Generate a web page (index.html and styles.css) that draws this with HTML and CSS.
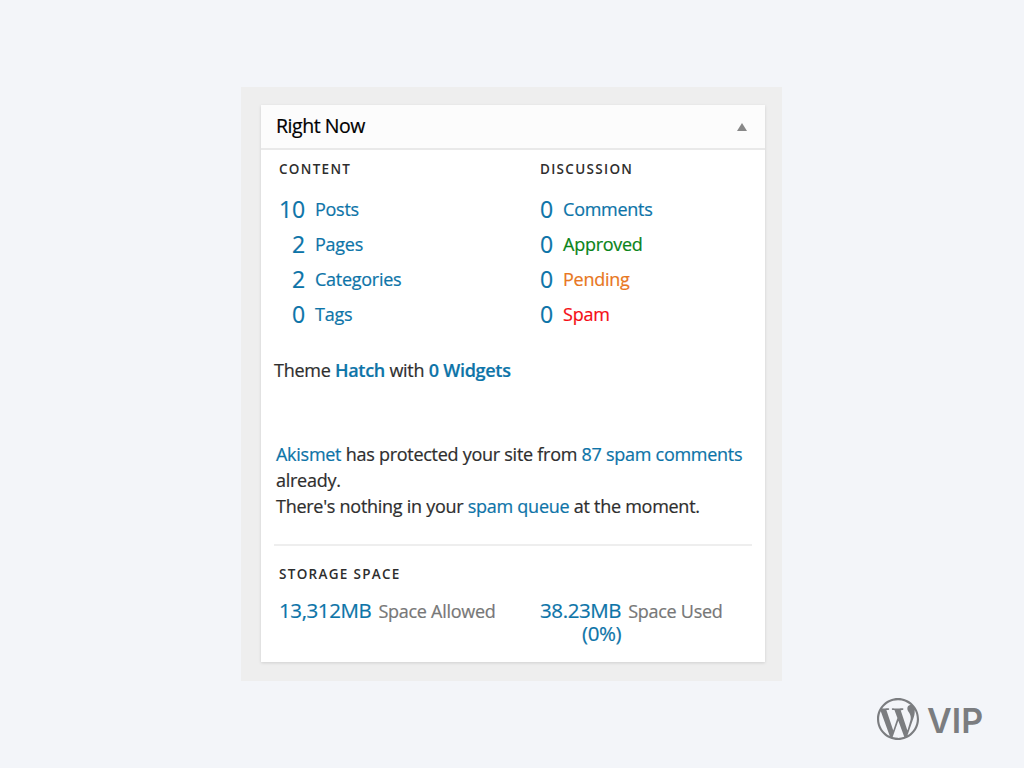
FILE: index.html
```html
<!DOCTYPE html>
<html lang="en">
<head>
<meta charset="utf-8">
<title>Right Now</title>
<link rel="stylesheet" href="styles.css">
</head>
<body>
<main class="frame">
  <section class="panel">
    <header class="panel-head">
      <h2 class="panel-title">Right Now</h2>
      <svg class="toggle" width="10" height="8" viewBox="0 0 10 8"><path d="M5 0L10 8H0z"/></svg>
    </header>
    <div class="columns">
      <div class="column">
        <h3 class="label">Content</h3>
        <div class="row"><span class="num wide">10</span><span class="name">Posts</span></div>
        <div class="row"><span class="num wide">2</span><span class="name">Pages</span></div>
        <div class="row"><span class="num wide">2</span><span class="name">Categories</span></div>
        <div class="row"><span class="num wide">0</span><span class="name">Tags</span></div>
      </div>
      <div class="column">
        <h3 class="label">Discussion</h3>
        <div class="row"><span class="num">0</span><span class="name">Comments</span></div>
        <div class="row"><span class="num">0</span><span class="name approved">Approved</span></div>
        <div class="row"><span class="num">0</span><span class="name pending">Pending</span></div>
        <div class="row"><span class="num">0</span><span class="name spam">Spam</span></div>
      </div>
    </div>
    <p class="theme">Theme <a class="link strong">Hatch</a> with <a class="link strong">0 Widgets</a></p>
    <p class="akismet"><a class="link">Akismet</a> has protected your site from <a class="link">87 spam comments</a><br>already.<br>There's nothing in your <a class="link">spam queue</a> at the moment.</p>
    <div class="storage">
      <h3 class="label storage-label">Storage Space</h3>
      <div class="quota">
        <div class="quota-item"><div class="amount"><div>13,312MB</div></div><span class="caption">Space Allowed</span></div>
        <div class="quota-item"><div class="amount"><div>38.23MB</div><div>(0%)</div></div><span class="caption">Space Used</span></div>
      </div>
    </div>
  </section>
</main>
<footer class="brand">
  <svg class="brand-mark" viewBox="0 0 24 24"><path d="M21.469 6.825c.84 1.537 1.318 3.3 1.318 5.175 0 3.979-2.156 7.456-5.363 9.325l3.295-9.527c.615-1.54.82-2.771.82-3.864 0-.405-.026-.78-.07-1.11m-7.981.105c.647-.03 1.232-.105 1.232-.105.582-.075.514-.93-.067-.899 0 0-1.755.135-2.88.135-1.064 0-2.85-.15-2.85-.15-.585-.03-.661.855-.075.885 0 0 .54.061 1.125.09l1.68 4.605-2.37 7.08L5.354 6.9c.649-.03 1.234-.1 1.234-.1.585-.075.516-.93-.065-.896 0 0-1.746.138-2.874.138-.2 0-.438-.008-.69-.015C4.911 3.15 8.235 1.215 12 1.215c2.809 0 5.365 1.072 7.286 2.833-.046-.003-.091-.009-.141-.009-1.06 0-1.812.923-1.812 1.914 0 .89.513 1.643 1.06 2.531.411.72.89 1.643.89 2.977 0 .915-.354 1.994-.821 3.479l-1.075 3.585-3.9-11.61.001.014zM12 22.784c-1.059 0-2.081-.153-3.048-.437l3.237-9.406 3.315 9.087c.024.053.05.101.078.149-1.12.393-2.325.609-3.582.609M1.211 12c0-1.564.336-3.05.935-4.39L7.29 21.709C3.694 19.96 1.212 16.271 1.211 12M12 0C5.385 0 0 5.385 0 12s5.385 12 12 12 12-5.385 12-12S18.615 0 12 0"/></svg>
  <span class="brand-name">VIP</span>
</footer>
</body>
</html>
```
FILE: styles.css
```css
* { box-sizing: border-box; margin: 0; }
body {
  width: 1024px;
  height: 768px;
  overflow: hidden;
  display: flex;
  flex-direction: column;
  padding-top: 87px;
  background: #f3f5f9;
  color: #2e2e2e;
  font: 18px/26px "Open Sans", sans-serif;
  letter-spacing: -.27px;
  -webkit-text-stroke: .2px;
}
.frame {
  width: 541px;
  height: 594px;
  flex: none;
  margin-left: 241px;
  padding: 18px 17px 19px 20px;
  background: #eee;
}
.panel {
  width: 504px;
  height: 557px;
  background: #fff;
  box-shadow: 0 1px 3px rgba(0, 0, 0, .13);
}
.panel-head {
  display: flex;
  align-items: center;
  justify-content: space-between;
  height: 45px;
  padding: 0 18px 0 15px;
  border-bottom: 2px solid #e9e9e9;
  background: #fcfcfc;
}
.panel-title { padding-bottom: 1px; font-size: 19.5px; letter-spacing: -.45px; font-weight: 400; color: #000; }
.toggle { fill: #888; }
.columns { display: grid; grid-template-columns: 261px 1fr; padding: 9px 0 0 18px; }
.label {
  height: 33px;
  font-size: 13.5px;
  line-height: 20px;
  font-weight: 600;
  letter-spacing: 1.3px;
  text-transform: uppercase;
  -webkit-text-stroke: 0;
}
.row { display: flex; align-items: center; gap: 10px; height: 35px; line-height: 35px; color: #0d74a8; }
.num { font-size: 23px; letter-spacing: -.1px; }
.wide { width: 26px; text-align: right; }
.approved { color: #0a8418; }
.pending { color: #e87722; }
.spam { color: #f50c14; }
.theme { padding: 25px 0 0 13px; }
.link { color: #0d74a8; }
.strong { font-weight: 600; }
.akismet { padding: 58px 0 0 15px; line-height: 26.2px; white-space: nowrap; }
.storage { margin: 24px 13px 0; padding: 18px 0 0 5px; border-top: 2px solid #eee; }
.storage-label { height: 35px; }
.quota { display: grid; grid-template-columns: 261px 1fr; }
.quota-item { display: flex; align-items: baseline; gap: 7px; line-height: 23px; }
.amount { font-size: 20.5px; letter-spacing: -.4px; text-align: right; color: #0d74a8; }
.caption { color: #777; }
.brand { display: flex; align-items: center; gap: 8px; height: 42px; margin: 17px 0 0 877px; color: #7b7d80; letter-spacing: 0; -webkit-text-stroke: 0; }
.brand-mark { width: 42px; height: 42px; fill: currentColor; }
.brand-name { font: 600 34px/42px Inter, sans-serif; padding-top: 4px; }
```
